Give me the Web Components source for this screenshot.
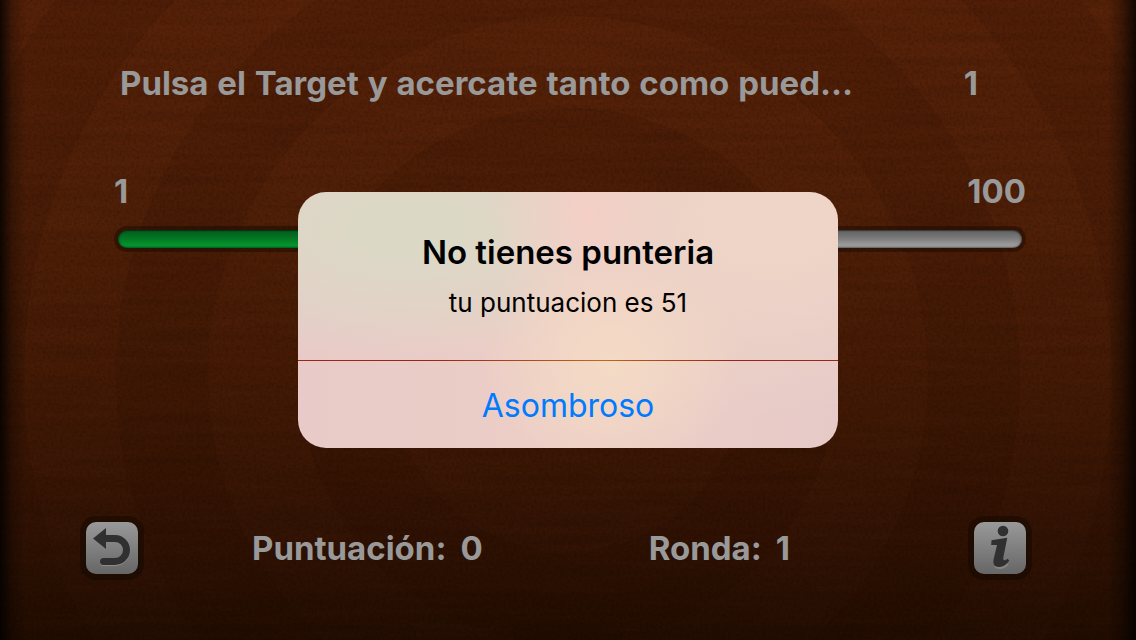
<!DOCTYPE html>
<html lang="es">
<head>
<meta charset="utf-8">
<meta name="viewport" content="width=device-width, initial-scale=1">
<title>Target</title>
<style>
  html, body { margin: 0; min-height: 100%; background: #230e03; }
  body { font-family: Inter, "Liberation Sans", sans-serif; }
</style>
</head>
<body>
<target-game>
  <wood-backdrop slot="backdrop"></wood-backdrop>
  <game-prompt slot="prompt" target="1">Pulsa el Target y acercate tanto como pued…</game-prompt>
  <target-slider slot="slider" min="1" max="100" value="50"></target-slider>
  <game-footer slot="footer">
    <icon-button slot="start" label="Reiniciar">
      <svg viewBox="0 0 52 52" width="52" height="52" aria-hidden="true">
        <path d="M17.5 40.5H29A11.5 11.5 0 0 0 40.5 29" fill="none" stroke="#8c8c8c" stroke-width="7" stroke-linecap="round"/>
        <path d="M7 16.5 20 6v21z" fill="#303030"/>
        <path d="M19 16.5h10a11.5 11.5 0 0 1 0 23H17.5" fill="none" stroke="#303030" stroke-width="7"/>
        <circle cx="17.5" cy="39.5" r="3.5" fill="#303030"/>
      </svg>
    </icon-button>
    <score-label name="Puntuación:" value="0"></score-label>
    <score-label name="Ronda:" value="1"></score-label>
    <icon-button slot="end" label="Información">
      <svg viewBox="0 0 52 52" width="52" height="52" aria-hidden="true">
        <path d="M21 43c2 3 9 3 13-2" fill="none" stroke="#858585" stroke-width="2" transform="translate(0 1)"/>
        <circle cx="29" cy="9" r="5.3" fill="#303030"/>
        <path d="M17.5 18.3 33.3 15.7 29.3 35.5c-.6 3 1.6 3.6 4.2 1.2L35.3 38.6C32.5 43 29 45 25.2 45c-4.6 0-6.5-2.7-5.6-7.5L23 23h-5.8z" fill="#303030"/>
      </svg>
    </icon-button>
  </game-footer>
  <alert-dialog slot="dialog" heading="No tienes punteria" message="tu puntuacion es 51">Asombroso</alert-dialog>
</target-game>

<script>
const define = (name, html, setup) => {
  const template = document.createElement('template');
  template.innerHTML = html;
  customElements.define(name, class extends HTMLElement {
    constructor() {
      super();
      this.attachShadow({ mode: 'open' }).append(template.content.cloneNode(true));
    }
    connectedCallback() { if (setup) setup(this, this.shadowRoot); }
  });
};

define('wood-backdrop', `
  <style>
    :host { display: block; position: absolute; inset: 0; overflow: hidden;
      background: linear-gradient(#582209, #502008 35%, #461b06 58%, #341405 83%, #240e03); }
    svg { display: block; width: 100%; height: 100%; }
    .edges { position: absolute; inset: 0;
      background: linear-gradient(90deg, rgba(0,0,0,.8), rgba(0,0,0,.25) 12px, transparent 26px, transparent calc(100% - 28px), rgba(0,0,0,.3) calc(100% - 14px), rgba(0,0,0,.8)); }
  </style>
  <svg viewBox="0 0 1136 640" preserveAspectRatio="xMidYMid slice" aria-hidden="true">
    <defs>
      <filter id="grain" x="0" y="0" width="100%" height="100%">
        <feTurbulence type="fractalNoise" baseFrequency="0.008 0.12" numOctaves="4" seed="8"/>
        <feColorMatrix values="0 0 0 0 0  0 0 0 0 0  0 0 0 0 0  1.1 0 0 0 -0.4"/>
      </filter>
      <filter id="speckle" x="0" y="0" width="100%" height="100%">
        <feTurbulence type="fractalNoise" baseFrequency="0.35" numOctaves="2" seed="3"/>
        <feColorMatrix values="0 0 0 0 0  0 0 0 0 0  0 0 0 0 0  1 0 0 0 -0.4"/>
      </filter>
    </defs>
    <g fill="none" stroke="#200800" stroke-opacity=".1">
      <circle cx="568" cy="376" r="590" stroke-width="92"/>
      <circle cx="568" cy="376" r="406" stroke-width="92"/>
      <circle cx="568" cy="376" r="222" stroke-width="92"/>
    </g>
    <rect width="1136" height="640" filter="url(#grain)" opacity=".14"/>
    <rect width="1136" height="640" filter="url(#speckle)" opacity=".35"/>
  </svg>
  <div class="edges"></div>`);

define('target-game', `
  <style>
    :host { display: block; position: relative; min-height: 100vh; color: #999; }
    main { position: relative; box-sizing: border-box; min-height: 100vh; padding: 61px 104px 60px 80px;
      display: flex; flex-direction: column; }
    ::slotted([slot=prompt]) { margin: 0 0 64px 40px; }
    ::slotted([slot=slider]) { margin: 0 6px 0 34px; }
    ::slotted([slot=footer]) { margin-top: auto; }
  </style>
  <slot name="backdrop"></slot>
  <main>
    <slot name="prompt"></slot>
    <slot name="slider"></slot>
    <slot name="footer"></slot>
  </main>
  <slot name="dialog"></slot>`);

define('game-prompt', `
  <style>
    :host { display: flex; justify-content: space-between; align-items: center;
      font-size: 33px; line-height: 44px; font-weight: 700; }
    .text { white-space: nowrap; font-variant-numeric: tabular-nums; }
    output { padding-right: 54px; }
  </style>
  <span class="text"><slot></slot></span><output></output>`,
  (el, root) => { root.querySelector('output').textContent = el.getAttribute('target'); });

define('target-slider', `
  <style>
    :host { display: block; }
    .limits { display: flex; justify-content: space-between;
      font-size: 33px; line-height: 44px; font-weight: 700; }
    .track { display: flex; margin-top: 13px; padding: 4px; border-radius: 13px; background: rgba(16,6,0,.4); }
    input { appearance: none; -webkit-appearance: none; box-sizing: border-box; width: 100%; height: 18px; margin: 0;
      border-radius: 9px;
      background:
        linear-gradient(rgba(0,0,0,.38), rgba(0,0,0,.2) 45%, transparent 80%, transparent 90%, rgba(0,0,0,.2)),
        linear-gradient(90deg, #04922c 50%, #999 50%);
      box-shadow: inset 0 1px 1px rgba(0,0,0,.3), inset -1px 0 2px rgba(0,0,0,.35), inset 1px 0 2px rgba(0,0,0,.3); }
    input::-webkit-slider-thumb { -webkit-appearance: none; width: 50px; height: 50px; border-radius: 50%; background: #a02010; }
  </style>
  <div class="limits"><label for="range" class="min"></label><span class="max"></span></div>
  <div class="track"><input id="range" type="range"></div>`,
  (el, root) => {
    const input = root.querySelector('input');
    for (const key of ['min', 'max', 'value']) input.setAttribute(key, el.getAttribute(key));
    root.querySelector('.min').textContent = input.min;
    root.querySelector('.max').textContent = input.max;
  });

define('game-footer', `
  <style>
    :host { display: flex; align-items: center; }
    ::slotted(score-label:nth-of-type(1)) { margin-left: 108px; }
    ::slotted(score-label:nth-of-type(2)) { margin-left: 166px; }
    .end { margin-left: auto; }
  </style>
  <slot name="start"></slot><slot></slot><div class="end"><slot name="end"></slot></div>`);

define('score-label', `
  <style>
    :host { display: flex; gap: 14px; font-size: 33px; line-height: 44px; font-weight: 700; white-space: nowrap; }
  </style>
  <span></span><output></output>`,
  (el, root) => {
    root.querySelector('span').textContent = el.getAttribute('name');
    root.querySelector('output').textContent = el.getAttribute('value');
  });

define('icon-button', `
  <style>
    :host { display: block; padding: 6px; border-radius: 16px; background: rgba(16,6,0,.45); }
    button { display: block; width: 52px; height: 52px; padding: 0; border: 0; border-radius: 10px;
      background: linear-gradient(#999, #666); cursor: pointer; }
  </style>
  <button type="button"><slot></slot></button>`,
  (el, root) => root.querySelector('button').setAttribute('aria-label', el.getAttribute('label')));

define('alert-dialog', `
  <style>
    :host { position: absolute; inset: 0; display: grid; place-items: center; color: #000; text-align: center; }
    section { width: 540px; max-width: 90%; border-radius: 28px; overflow: hidden;
      background:
        radial-gradient(ellipse 130px 110px at 58% 68%, #f4dbc5, rgba(244,219,197,.6) 45%, rgba(244,219,197,0)),
        radial-gradient(ellipse 100px 150px at 54% 8%, #f4cfc6, rgba(244,207,198,0)),
        radial-gradient(ellipse 290px 130px at 20% 14%, #dcd8c6 20%, rgba(220,216,198,.6) 60%, rgba(220,216,198,0)),
        radial-gradient(ellipse 280px 200px at 88% 10%, #eed5c7 20%, rgba(238,213,199,0)),
        linear-gradient(90deg, #e8cbc8, #edcec6 55%, #e6cac8); }
    h1 { margin: 0; padding-top: 38px; font-size: 33px; line-height: 44px; font-weight: 600; }
    p { margin: 0; padding: 12px 0 40px; font-size: 26px; line-height: 34px; }
    hr { height: 1px; margin: 0; border: 0; background: linear-gradient(90deg, #9c2418 25%, #c46420 56%, #9c2418 80%); }
    button { display: block; width: 100%; height: 87px; padding: 2px 0 0; border: 0; background: none; color: #007aff;
      font: 400 32px/44px Inter, "Liberation Sans", sans-serif; cursor: pointer; }
  </style>
  <section role="alertdialog" aria-modal="true" aria-labelledby="heading" aria-describedby="message">
    <h1 id="heading"></h1><p id="message"></p><hr><button type="button"><slot></slot></button>
  </section>`,
  (el, root) => {
    root.querySelector('h1').textContent = el.getAttribute('heading');
    root.querySelector('p').textContent = el.getAttribute('message');
  });
</script>
</body>
</html>
